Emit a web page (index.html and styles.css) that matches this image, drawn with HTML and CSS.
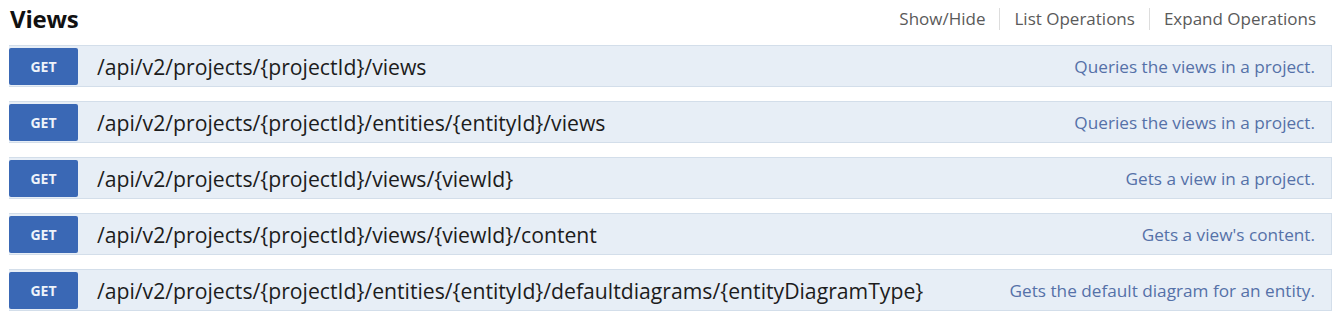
FILE: index.html
```html
<!DOCTYPE html>
<html>
  <head>
    <meta charset="utf-8">
    <link rel="stylesheet" href="styles.css">
  </head>
  <body>
    <div id="resource">
      <div class="heading">
        <h2>Views</h2>
        <ul class="options">
          <li><a href="#">Show/Hide</a></li>
          <li><a href="#">List Operations</a></li>
          <li><a href="#">Expand Operations</a></li>
        </ul>
      </div>
      <ul class="endpoints">
        <li class="op">
          <span class="method">GET</span>
          <span class="path">/api/v2/projects/{projectId}/views</span>
          <span class="summary">Queries the views in a project.</span>
        </li>
        <li class="op">
          <span class="method">GET</span>
          <span class="path">/api/v2/projects/{projectId}/entities/{entityId}/views</span>
          <span class="summary">Queries the views in a project.</span>
        </li>
        <li class="op">
          <span class="method">GET</span>
          <span class="path">/api/v2/projects/{projectId}/views/{viewId}</span>
          <span class="summary">Gets a view in a project.</span>
        </li>
        <li class="op">
          <span class="method">GET</span>
          <span class="path">/api/v2/projects/{projectId}/views/{viewId}/content</span>
          <span class="summary">Gets a view's content.</span>
        </li>
        <li class="op">
          <span class="method">GET</span>
          <span class="path">/api/v2/projects/{projectId}/entities/{entityId}/defaultdiagrams/{entityDiagramType}</span>
          <span class="summary">Gets the default diagram for an entity.</span>
        </li>
      </ul>
    </div>
  </body>
</html>
```

FILE: styles.css
```css
html, body {
  margin: 0;
  padding: 0;
  background: #fff;
  font-family: "Open Sans", sans-serif;
}

#resource {
  padding: 0 5px 0 9px;
}

.heading {
  display: flex;
  align-items: center;
  justify-content: space-between;
  height: 37px;
  margin-bottom: 8px;
}

.heading h2 {
  margin: 0 0 0 1px;
  font-size: 24px;
  font-weight: 700;
  color: #111;
  letter-spacing: -.2px;
}

.options {
  display: flex;
  list-style: none;
  margin: 0;
  padding: 0;
}

.options li {
  padding: 0 14px;
  border-left: 1px solid #ddd;
  line-height: 22px;
}

.options li:first-child {
  border-left: none;
}

.options li:last-child {
  padding-right: 16px;
}

.options a {
  font-size: 17px;
  color: #5a5a5a;
  text-decoration: none;
}

.endpoints {
  list-style: none;
  margin: 0;
  padding: 0;
}

.op {
  display: flex;
  align-items: center;
  height: 42px;
  box-sizing: border-box;
  margin-bottom: 14px;
  background: #e7eef6;
  border: 1px solid #d3deea;
  border-left: none;
}

.method {
  width: 69px;
  height: 37px;
  line-height: 37px;
  text-align: center;
  background: #3a68b5;
  color: #eef3fa;
  font-size: 14px;
  font-weight: 700;
  border-radius: 2px;
}

.path {
  margin-left: 19px;
  font-size: 21.2px;
  color: #1c1c1c;
}

.summary {
  margin-left: auto;
  padding-right: 16px;
  font-size: 17.2px;
  color: #5571a8;
}
```
